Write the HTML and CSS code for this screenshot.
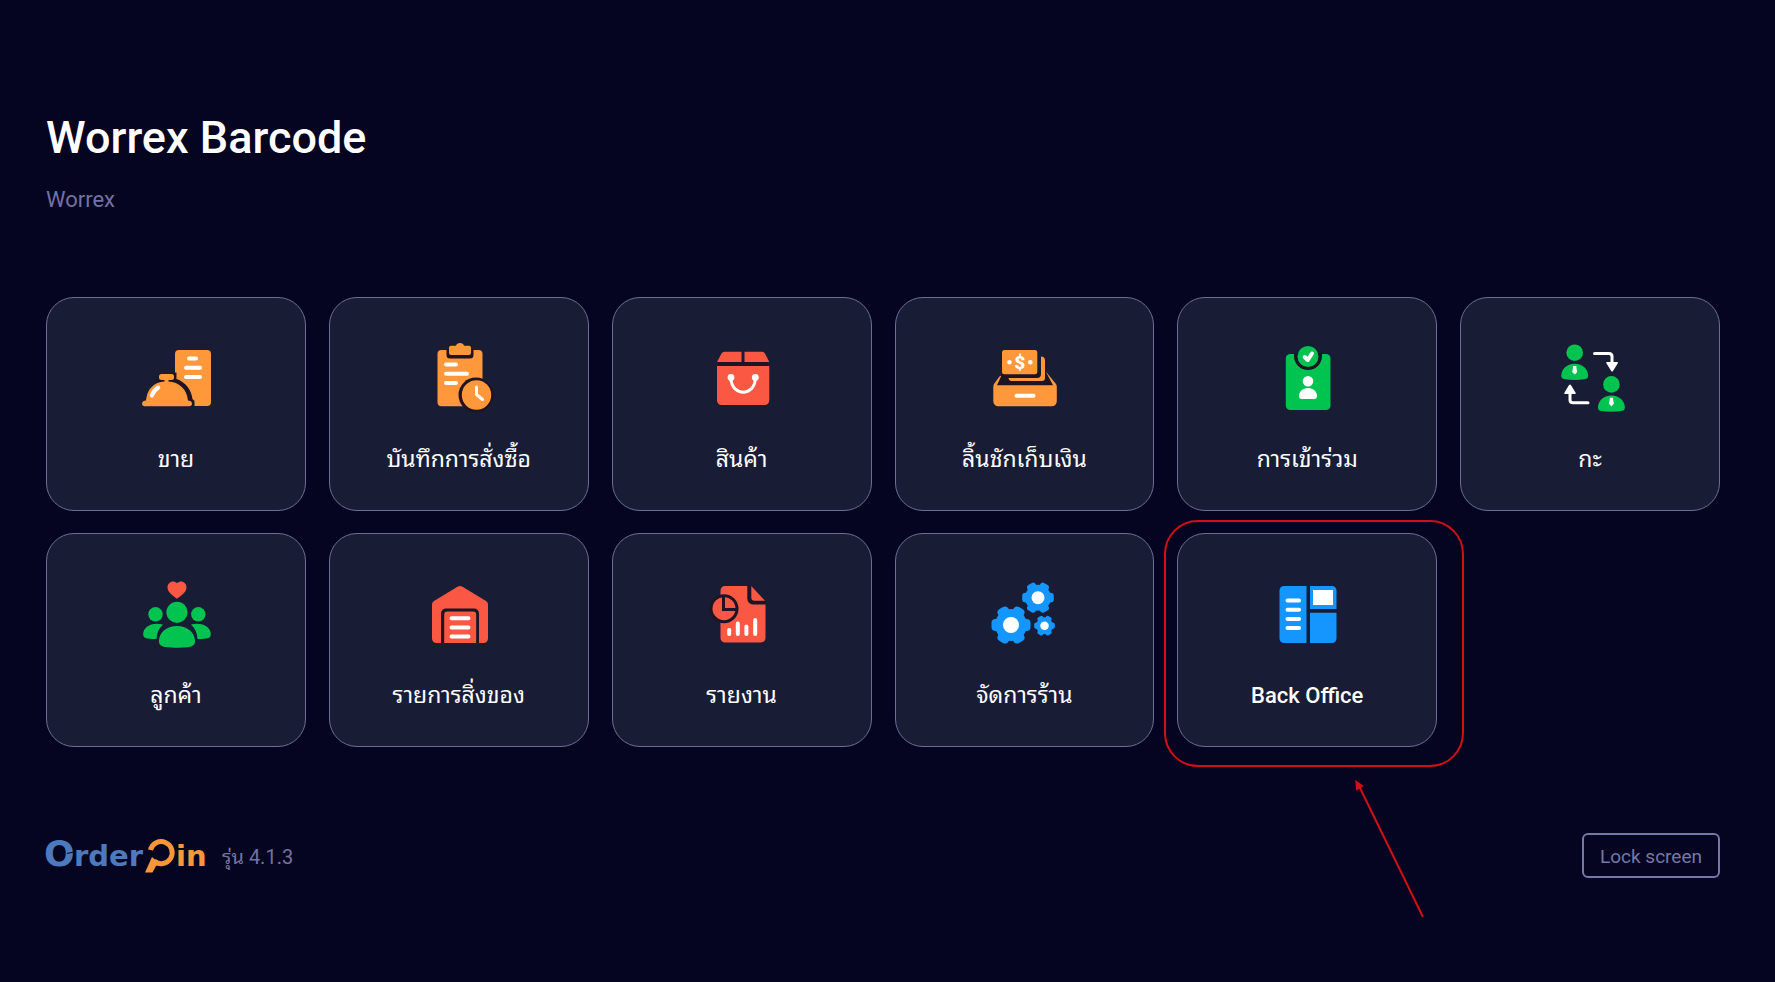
FILE: index.html
```
<!DOCTYPE html>
<html lang="th">
<head>
    <meta charset="UTF-8">
    <meta name="viewport" content="width=device-width, initial-scale=1.0">
    <title>Worrex Barcode</title>
    <link rel="stylesheet" href="styles.css">
</head>
<body>
    <header class="header">
        <h1>Worrex Barcode</h1>
        <p>Worrex</p>
    </header>

    <main>
        <ul class="menu">
            <li>
                <button type="button" class="tile">
                    <svg class="icon orange" viewBox="0 0 80 80" aria-hidden="true">
                        <rect x="39" y="12" width="36" height="56" rx="4"/>
                        <path class="line" d="M53 20.500h7M50 29.700h14M50 39h14"/>
                        <path class="dark" d="M36 34.500h4.500v6.500c9 3 15 11 16 20l2 2v5.500H20V42z"/>
                        <rect x="23" y="36" width="15" height="6" rx="2.500"/>
                        <path d="M28.500 41h4v2.500C43 44 51 51 52 62.500c2 0 4 1 4 3.300 0 1.500-1 2.500-2.500 2.500h-45C7 68.300 6 67.300 6 65.800c0-2.300 2-3.300 4-3.300C11 51 18 44 28.500 43.500z"/>
                        <path class="line" d="M15.800 57.500q2-5 6.500-8"/>
                    </svg>
                    <span>ขาย</span>
                </button>
            </li>
            <li>
                <button type="button" class="tile">
                    <svg class="icon orange" viewBox="0 0 80 80" aria-hidden="true">
                        <rect x="18.500" y="12" width="45" height="56.300" rx="4"/>
                        <path class="dark" d="M27.500 11h27v6a3.500 3.500 0 0 1-3.500 3.500H31a3.500 3.500 0 0 1-3.500-3.500z"/>
                        <path d="M32 7.700h5c.5-1.800 1.800-2.700 4-2.700s3.500.9 4 2.700h5a2 2 0 0 1 2 2V15a2 2 0 0 1-2 2H32a2 2 0 0 1-2-2V9.700a2 2 0 0 1 2-2z"/>
                        <path class="line" d="M27 26.500h10M27 35.700h21M27 45h10"/>
                        <circle class="dark" cx="57" cy="57" r="17.500"/>
                        <circle cx="57.500" cy="57" r="14.700"/>
                        <path class="line thin" d="M57.500 49v7.500l6 5"/>
                    </svg>
                    <span>บันทึกการสั่งซื้อ</span>
                </button>
            </li>
            <li>
                <button type="button" class="tile">
                    <svg class="icon red" viewBox="0 0 80 80" aria-hidden="true">
                        <path class="dark" d="M16 23h50v6H16z"/>
                        <path d="M22.500 13.700h17V24H15l4.500-8.500q1-1.800 3-1.800zM42.500 13.700h17.500q2 0 3 1.800L67.300 24H42.500zM15 28h52.300v34.500a4.500 4.500 0 0 1-4.500 4.500H19.500a4.500 4.500 0 0 1-4.500-4.500z"/>
                        <circle class="white" cx="29" cy="39.500" r="3.400"/>
                        <circle class="white" cx="53.300" cy="39.500" r="3.400"/>
                        <path class="line thin" d="M29 41c1 17.500 23.300 17.500 24.300 0"/>
                    </svg>
                    <span>สินค้า</span>
                </button>
            </li>
            <li>
                <button type="button" class="tile">
                    <svg class="icon orange" viewBox="0 0 80 80" aria-hidden="true">
                        <path d="M62.600 34.500l9 11q1.200 1.500 1.200 3.200V63a5 5 0 0 1-5 5.300H14.300a5 5 0 0 1-5-5.300V48.700q0-1.700 1-3.200l5.200-7q1.200-1.200 2.500-.2z"/>
                        <path class="dark" d="M19 34h43l7 13.300H13z"/>
                        <path d="M57 18.500c2.500 0 4 1.500 4 4V40a3 3 0 0 1-3 3H27.500q-2.500 0-3-3H53a4 4 0 0 0 4-4z"/>
                        <rect x="18" y="12" width="35.300" height="24.300" rx="2.500"/>
                        <circle class="white" cx="25.500" cy="24.300" r="2.300"/>
                        <circle class="white" cx="46.300" cy="24.300" r="2.300"/>
                        <text class="dollar" x="35.800" y="31">$</text>
                        <path class="line" d="M32.500 57.700h17"/>
                    </svg>
                    <span>ลิ้นชักเก็บเงิน</span>
                </button>
            </li>
            <li>
                <button type="button" class="tile">
                    <svg class="icon green" viewBox="0 0 80 80" aria-hidden="true">
                        <rect x="18.800" y="16" width="44.700" height="56" rx="4.500"/>
                        <path class="dark" d="M27 15h28v3a14 14 0 0 1-28 0z"/>
                        <circle cx="41" cy="18.500" r="10.500"/>
                        <path class="line" d="M37.700 19l3 3 4.300-6.500"/>
                        <circle class="white" cx="41" cy="43.300" r="5.300"/>
                        <path class="white" d="M41 50c5.500 0 9 4 9 8 0 2-1 3-3 3H35c-2 0-3-1-3-3 0-4 3.500-8 9-8z"/>
                    </svg>
                    <span>การเข้าร่วม</span>
                </button>
            </li>
            <li>
                <button type="button" class="tile">
                    <svg class="icon green" viewBox="0 0 80 80" aria-hidden="true">
                        <g id="waiter">
                            <circle cx="24.700" cy="14.700" r="8.300"/>
                            <path d="M24.700 25.700C33 25.700 38.200 31.500 38.200 38q0 2.500-2.500 3-11 2-22 0-2.500-.5-2.500-3c0-6.500 5.200-12.300 13.500-12.300z"/>
                            <path class="white" d="M23 28h3.400v2l.8 4-2.500 2.500-2.500-2.500.8-4z"/>
                        </g>
                        <use href="#waiter" x="36.700" y="31.700"/>
                        <path class="line thin" d="M44.500 15.500H59q3 0 3 3V26M38 64.700H23q-3 0-3-3V54"/>
                        <path class="white" d="M57 24h10.300q1.200 0 .5 1.200L63 33q-.9 1.200-1.800 0l-4.800-7.800Q55.700 24 57 24zM25 56H14.900q-1.200 0-.5-1.200L19 47q1-1.200 1.900 0l4.700 7.800Q26.300 56 25 56z"/>
                    </svg>
                    <span>กะ</span>
                </button>
            </li>
            <li>
                <button type="button" class="tile">
                    <svg class="icon green" viewBox="0 0 80 80" aria-hidden="true">
                        <path class="heart" d="M41 9C45 5.500 50.500 8 50.500 13.500c0 5-6 8.500-9.500 11.200-3.500-2.700-9.500-6.200-9.500-11.200C31.500 8 37 5.500 41 9z"/>
                        <circle cx="41" cy="38.300" r="10.600"/>
                        <circle cx="19.500" cy="40.300" r="7.200"/>
                        <circle cx="62.300" cy="40.300" r="7.200"/>
                        <path d="M41 52c11 0 18 7 18 15 0 5-3 6.700-18 6.700S23 72 23 67c0-8 7-15 18-15zM27 50.500c-11-3-19.800 2.500-19.800 9.500 0 4.500 3 5 13.300 5 .3-6 2.500-11 6.500-14.500zM55 50.500c11-3 19.800 2.500 19.800 9.500 0 4.500-3 5-13.300 5-.3-6-2.500-11-6.500-14.500z"/>
                    </svg>
                    <span>ลูกค้า</span>
                </button>
            </li>
            <li>
                <button type="button" class="tile">
                    <svg class="icon red" viewBox="0 0 80 80" aria-hidden="true">
                        <path d="M38.500 12.700q2.500-1.500 5 0L67 27q2 1.300 2 3.500v34a4.500 4.500 0 0 1-4.500 4.500h-47a4.500 4.500 0 0 1-4.500-4.500v-34q0-2.200 2-3.500z"/>
                        <path class="dark" d="M22 69V39.500a5 5 0 0 1 5-5h28a5 5 0 0 1 5 5V69z"/>
                        <path d="M25.200 69V40.500a3 3 0 0 1 3-3h26a3 3 0 0 1 3 3V69z"/>
                        <path class="line" d="M32.500 44.300h17M32.500 53.400h17M32.500 62.500h17"/>
                    </svg>
                    <span>รายการสิ่งของ</span>
                </button>
            </li>
            <li>
                <button type="button" class="tile">
                    <svg class="icon red" viewBox="0 0 80 80" aria-hidden="true">
                        <path d="M23 12h26l14.500 15v37a4.500 4.500 0 0 1-4.500 4.500H23a4.500 4.500 0 0 1-4.500-4.500V16.500A4.500 4.500 0 0 1 23 12z"/>
                        <path class="dark" d="M45.300 11.500h4L64 27v3.500H51a6 6 0 0 1-5.700-6z"/>
                        <path d="M49.300 12L63 26.700H52.500a3.200 3.200 0 0 1-3.200-3.200z"/>
                        <circle class="dark" cx="22" cy="34.700" r="14.500"/>
                        <circle cx="22" cy="34.700" r="11.500"/>
                        <path class="cut" d="M21.500 22v13.500H35"/>
                        <path class="line" d="M27.200 56v4M35.800 49.500V60M44.400 52.500V60M53.200 46v14"/>
                    </svg>
                    <span>รายงาน</span>
                </button>
            </li>
            <li>
                <button type="button" class="tile">
                    <svg class="icon blue" viewBox="0 0 80 80" aria-hidden="true">
                        <defs>
                            <g id="gear">
                                <circle r="16"/>
                                <rect x="-19.500" y="-6" width="39" height="12" rx="4"/>
                                <rect x="-19.500" y="-6" width="39" height="12" rx="4" transform="rotate(60)"/>
                                <rect x="-19.500" y="-6" width="39" height="12" rx="4" transform="rotate(120)"/>
                                <circle class="white" r="8"/>
                            </g>
                        </defs>
                        <use href="#gear" transform="translate(27 51)"/>
                        <use href="#gear" transform="translate(54 23.700) scale(.81)"/>
                        <use href="#gear" transform="translate(60.500 51.700) scale(.53)"/>
                    </svg>
                    <span>จัดการร้าน</span>
                </button>
            </li>
            <li class="marked">
                <button type="button" class="tile">
                    <svg class="icon blue" viewBox="0 0 80 80" aria-hidden="true">
                        <path d="M17 12h22.500v57H17a4.500 4.500 0 0 1-4.500-4.500v-48A4.500 4.500 0 0 1 17 12zM43 12h22a4.500 4.500 0 0 1 4.500 4.500V35H43zM43 38.700h26.500v25.800A4.500 4.500 0 0 1 65 69H43z"/>
                        <path class="white" d="M46 16h20v15H46z"/>
                        <path class="line" d="M20.500 26.400h11.500M20.500 35.700h11.500M20.500 44.900h11.500M20.500 54h11.500"/>
                    </svg>
                    <span class="latin">Back Office</span>
                </button>
                <div class="mark-box"></div>
                <svg class="mark-arrow" viewBox="0 0 74 144" aria-hidden="true">
                    <path d="M4.500 8L68 138"/>
                    <path class="tip" d="M1.500 3l5.500 4-5 3z"/>
                </svg>
            </li>
        </ul>
    </main>

    <footer class="footer">
        <div class="brand">
            <svg class="logo" viewBox="0 0 162 40" role="img" aria-label="OrderPin">
                <text class="logo-blue logo-big" x="-2" y="30">O</text>
                <path class="notch" d="M21 17.500l9-2"/>
                <text class="logo-blue" x="28" y="30">rder</text>
                <path class="pin" d="M104.500 14A11 11 0 1 1 108 25"/>
                <path class="handle" d="M106 21l7 6-3 3-3.500 6.500H99z"/>
                <text class="logo-orange" x="130" y="30">in</text>
            </svg>
            <span class="version">รุ่น 4.1.3</span>
        </div>
        <button type="button" class="lock">Lock screen</button>
    </footer>
</body>
</html>
```
FILE: styles.css
```
* {
    box-sizing: border-box;
    margin: 0;
    padding: 0;
}

body {
    min-height: 100vh;
    padding: 111px 55px 40px 46px;
    background-color: #060521;
    color: #fff;
    font-family: Roboto, "Noto Sans Thai Looped", "Noto Sans Thai", "Noto Sans", sans-serif;
}

h1 {
    font-size: 45px;
    font-weight: 500;
    line-height: 54px;
}

.header p {
    margin-top: 21px;
    color: #7173a3;
    font-size: 22px;
    line-height: 28px;
}

.menu {
    display: grid;
    grid-template-columns: repeat(6, 1fr);
    gap: 22px 23px;
    margin-top: 83px;
    list-style: none;
}

.tile {
    display: flex;
    flex-direction: column;
    align-items: center;
    gap: 28px;
    width: 100%;
    height: 214px;
    padding-top: 40px;
    border: 1px solid #6c6e96;
    border-radius: 28px;
    background-color: #191c35;
    color: #fff;
    font-family: inherit;
    font-size: 23px;
    line-height: 28px;
    cursor: pointer;
}

.latin {
    font-size: 22px;
    font-weight: 500;
}

/* Iconos */
.icon {
    width: 80px;
    height: 80px;
}

.orange { fill: #ff983b; }
.red { fill: #fb5844; }
.green { fill: #00c350; }
.blue { fill: #1596ff; }
.heart { fill: #fb5844; }
.white { fill: #fff; }
.dark { fill: #1d1424; }

.line {
    fill: none;
    stroke: #fff;
    stroke-width: 4;
    stroke-linecap: round;
    stroke-linejoin: round;
}

.thin {
    stroke-width: 3;
}

.cut {
    fill: none;
    stroke: #1d1424;
    stroke-width: 3;
}

.dollar {
    fill: #fff;
    font-size: 19px;
    font-weight: 900;
    text-anchor: middle;
}

/* Marca roja sobre Back Office */
.marked {
    position: relative;
}

.mark-box {
    position: absolute;
    top: -13px;
    right: -27px;
    bottom: -20px;
    left: -13px;
    border: 2px solid #d30f16;
    border-radius: 34px;
    pointer-events: none;
}

.mark-arrow {
    position: absolute;
    top: 246px;
    left: 178px;
    width: 74px;
    height: 144px;
    fill: none;
    stroke: #d30f16;
    stroke-width: 2;
    pointer-events: none;
}

.mark-arrow .tip {
    fill: #d30f16;
}

.footer {
    display: flex;
    justify-content: space-between;
    align-items: center;
    margin-top: 86px;
}

.brand {
    display: flex;
    align-items: flex-end;
    gap: 14px;
}

.logo {
    width: 162px;
    height: 40px;
    overflow: visible;
    font-family: "DejaVu Sans", sans-serif;
    font-size: 29px;
    font-weight: 700;
}

.logo-blue { fill: #4d7abc; }
.logo-orange { fill: #f8973a; }
.logo-big { font-size: 36px; }

.notch {
    stroke: #060521;
    stroke-width: 1;
}

.pin {
    fill: none;
    stroke: #f8973a;
    stroke-width: 5;
}

.handle {
    fill: #f8973a;
}

.version {
    color: #7173a3;
    font-size: 20px;
    line-height: 38px;
}

.lock {
    height: 45px;
    padding: 2px 16px 0;
    border: 2px solid #7577a6;
    border-radius: 6px;
    background: none;
    color: #7577a6;
    font-family: inherit;
    font-size: 19px;
    cursor: pointer;
}
```
